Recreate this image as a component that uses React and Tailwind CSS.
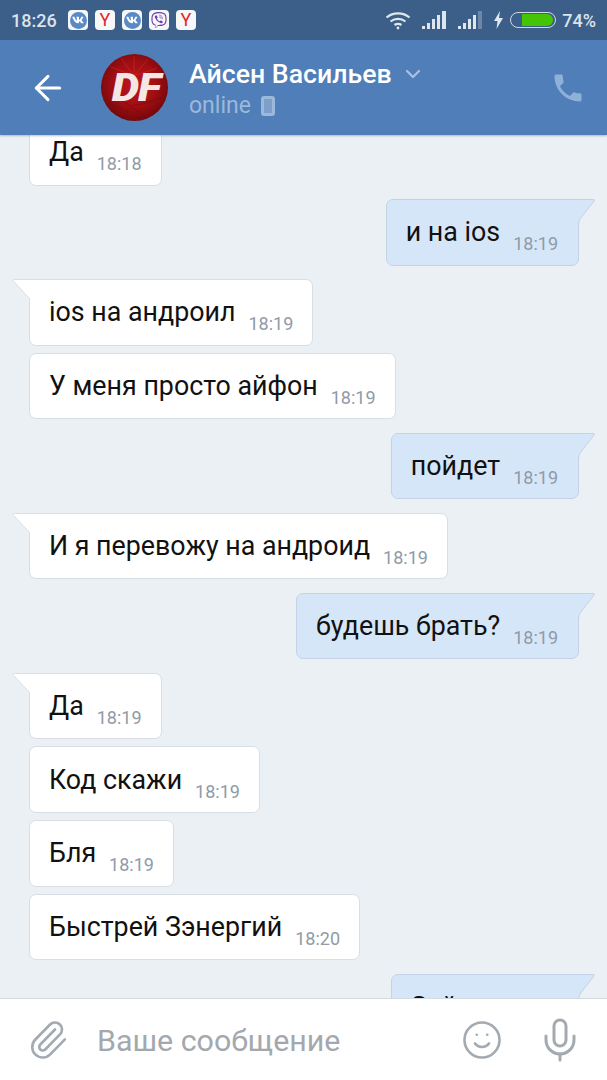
import { ArrowLeft, ChevronDown, Mic, Paperclip, Smile } from 'lucide-react';
import { FaVk, FaViber } from 'react-icons/fa';
import { MdPhone } from 'react-icons/md';

const groups = [
  { self: false, clipTail: true, items: [{ text: 'Да', time: '18:18' }] },
  { self: true, items: [{ text: 'и на ios', time: '18:19' }] },
  { self: false, items: [{ text: 'ios на андроил', time: '18:19' }, { text: 'У меня просто айфон', time: '18:19' }] },
  { self: true, items: [{ text: 'пойдет', time: '18:19' }] },
  { self: false, items: [{ text: 'И я перевожу на андроид', time: '18:19' }] },
  { self: true, items: [{ text: 'будешь брать?', time: '18:19' }] },
  {
    self: false,
    items: [
      { text: 'Да', time: '18:19' },
      { text: 'Код скажи', time: '18:19' },
      { text: 'Бля', time: '18:19' },
      { text: 'Быстрей Зэнергий', time: '18:20' },
    ],
  },
  { self: true, items: [{ text: 'Зайдет', time: '18:20' }] },
];

function AppBadge({ children }) {
  return <div className="flex h-[20px] w-[20px] items-center justify-center rounded-[4px] bg-[#f6f7f8]">{children}</div>;
}

function VkBadge() {
  return (
    <AppBadge>
      <div className="flex h-[17px] w-[17px] items-center justify-center rounded-full bg-[#5a8ac6]">
        <FaVk className="text-[12px] text-white" />
      </div>
    </AppBadge>
  );
}

function YandexBadge() {
  return (
    <AppBadge>
      <span className="text-[18px] leading-none font-normal text-[#e3262c]">Y</span>
    </AppBadge>
  );
}

function SignalIcon({ dim }) {
  return (
    <svg width="25" height="18" viewBox="0 0 25 18">
      <rect x="0" y="15" width="3" height="3" fill="#dfe6ee" />
      <rect x="5" y="12" width="3" height="6" fill="#dfe6ee" />
      <rect x="10" y="8" width="3" height="10" fill="#dfe6ee" />
      <rect x="15" y="4" width="3" height="14" fill="#dfe6ee" />
      <rect x="20" y="0" width="4" height="18" fill={dim ? '#6c87a8' : '#dfe6ee'} />
    </svg>
  );
}

function StatusBar() {
  return (
    <div className="flex h-[40px] shrink-0 items-center bg-[#3c5f89] pr-[11px] pl-[11px] text-[#dbe3ec]">
      <span className="w-[57px] text-[18px] font-medium">18:26</span>
      <div className="flex gap-[7px]">
        <VkBadge />
        <YandexBadge />
        <VkBadge />
        <AppBadge>
          <FaViber className="text-[16px] text-[#6f3fae]" />
        </AppBadge>
        <YandexBadge />
      </div>
      <div className="ml-auto flex items-center">
        <svg width="26" height="19" viewBox="0 0 26 19" fill="none" stroke="#dfe6ee" strokeWidth="2.2">
          <path d="M1.5 6.5C8 1 18 1 24.5 6.5" />
          <path d="M5.5 10.5C10 7 16 7 20.5 10.5" />
          <path d="M9.5 14C11.5 12.6 14.5 12.6 16.5 14" />
          <circle cx="13" cy="17" r="1.4" fill="#dfe6ee" stroke="none" />
        </svg>
        <div className="ml-[11px]">
          <SignalIcon />
        </div>
        <div className="ml-[11px]">
          <SignalIcon dim />
        </div>
        <svg className="ml-[11px]" width="9" height="18" viewBox="0 0 9 18" fill="#dfe6ee">
          <path d="M6 0 0 10h3.5L2.5 18 9 7H5z" />
        </svg>
        <div className="ml-[7px] flex h-[16px] w-[46px] items-center rounded-full border border-[#cfd8e3] pr-[2px] pl-[11px]">
          <div className="h-[12px] w-full rounded-r-full rounded-l-[2px] bg-[#45c406]" />
        </div>
        <span className="ml-[6px] text-[18px] font-medium">74%</span>
      </div>
    </div>
  );
}

function Avatar() {
  return (
    <div className="relative flex h-[67px] w-[67px] shrink-0 items-center justify-center overflow-hidden rounded-full bg-[radial-gradient(circle_at_50%_45%,#c01619_0%,#a00f13_45%,#640609_85%,#450406_100%)]">
      <svg className="absolute inset-0" width="67" height="67" viewBox="0 0 67 67" stroke="#e8453a" strokeWidth="0.7" opacity="0.45">
        <path d="M33 22 20 4M33 22 33 2M33 22 47 5M33 22 56 14M33 22 10 13" />
        <path d="M8 50 28 58M20 46 44 62M40 50 60 44M30 52 50 48" stroke="#7a0a0c" strokeWidth="1.4" />
      </svg>
      <span className="relative ml-[3px] [transform:scaleX(1.15)] text-[38px] leading-none font-black tracking-[-1px] text-[#f3e6e4] italic">DF</span>
    </div>
  );
}

function Header() {
  return (
    <div className="z-10 flex h-[95px] shrink-0 items-center bg-[#4f7eb8] shadow-[0_1px_2px_rgba(60,80,110,0.35)]">
      <ArrowLeft className="ml-[28px] h-[40px] w-[40px] text-white" strokeWidth={1.8} />
      <div className="ml-[33px]">
        <Avatar />
      </div>
      <div className="ml-[21px] flex flex-col pt-[3px]">
        <div className="flex items-center">
          <span className="text-[26.7px] leading-[30px] font-medium text-white">Айсен Васильев</span>
          <ChevronDown className="mt-[1px] ml-[9px] h-[24px] w-[24px] text-[#a9c2e0]" strokeWidth={2.2} />
        </div>
        <div className="mt-[3px] flex items-center">
          <span className="text-[23px] leading-[28px] text-[#9cb8da]">online</span>
          <div className="ml-[10px] h-[20px] w-[14px] rounded-[3px] border-[3px] border-[#9cb8da] bg-[#7d9fca]" />
        </div>
      </div>
      <MdPhone className="mr-[21px] ml-auto h-[36px] w-[36px] text-[#8fb0d9]" />
    </div>
  );
}

function Bubble({ text, time, self, tail }) {
  const colors = self ? 'bg-[#d6e6f9] border-[#c3d2e4] pr-[20px]' : 'bg-white border-[#d7dee6] pr-[19px]';
  return (
    <div className={`relative flex h-[66.67px] items-center rounded-[7px] border pl-[19px] ${colors} ${tail ? (self ? 'rounded-tr-none' : 'rounded-tl-none') : ''}`}>
      {tail && !self && (
        <svg className="absolute top-[-1px] left-[-18px]" width="18" height="20" viewBox="0 0 18 20">
          <path d="M18 0H1.5Q-.5 0 1 2L18 20z" fill="#fff" />
          <path d="M18 .5H1.5Q0 .5 1.2 2L18 20" fill="none" stroke="#d7dee6" />
        </svg>
      )}
      {tail && self && (
        <svg className="absolute top-[-1px] right-[-17px]" width="17" height="28" viewBox="0 0 17 28">
          <path d="M0 0H15.5Q17 0 16 2L2 20Q.5 22 0 28z" fill="#d6e6f9" />
          <path d="M0 .5H15.5Q17 .5 16 2L2 20Q.5 22 .5 28" fill="none" stroke="#c3d2e4" />
        </svg>
      )}
      <span className="text-[26.8px] leading-[30px] whitespace-nowrap text-[#111]">{text}</span>
      <span className="ml-[13px] [transform:translateY(12px)] text-[18px] leading-[22px] text-[#8f9ba8]">{time}</span>
    </div>
  );
}

function Chat() {
  return (
    <div className="flex min-h-0 flex-1 flex-col gap-[13.33px] overflow-hidden bg-[#ebf0f5] pr-[28px] pl-[29px]">
      {groups.map((group, i) => (
        <div key={i} className={`flex shrink-0 flex-col gap-[7px] ${group.self ? 'items-end' : 'items-start'} ${i === 0 ? '-mt-[16px]' : ''}`}>
          {group.items.map((item, j) => (
            <Bubble key={j} {...item} self={group.self} tail={j === 0 && !group.clipTail} />
          ))}
        </div>
      ))}
    </div>
  );
}

function InputBar() {
  return (
    <div className="z-10 flex h-[82px] shrink-0 items-center border-t border-[#d3dae3] bg-white text-[#a3aab2]">
      <Paperclip className="ml-[27px] h-[42px] w-[42px]" strokeWidth={1.5} />
      <span className="ml-[28px] pt-[3px] text-[30.4px] text-[#a3a8ae]">Ваше сообщение</span>
      <Smile className="ml-auto h-[42px] w-[42px]" strokeWidth={1.5} />
      <Mic className="mr-[23px] ml-[33px] h-[48px] w-[48px]" strokeWidth={1.5} />
    </div>
  );
}

export default function App() {
  return (
    <div className="flex h-[1080px] w-[607px] flex-col overflow-hidden font-['Roboto',sans-serif]">
      <StatusBar />
      <Header />
      <Chat />
      <InputBar />
    </div>
  );
}
